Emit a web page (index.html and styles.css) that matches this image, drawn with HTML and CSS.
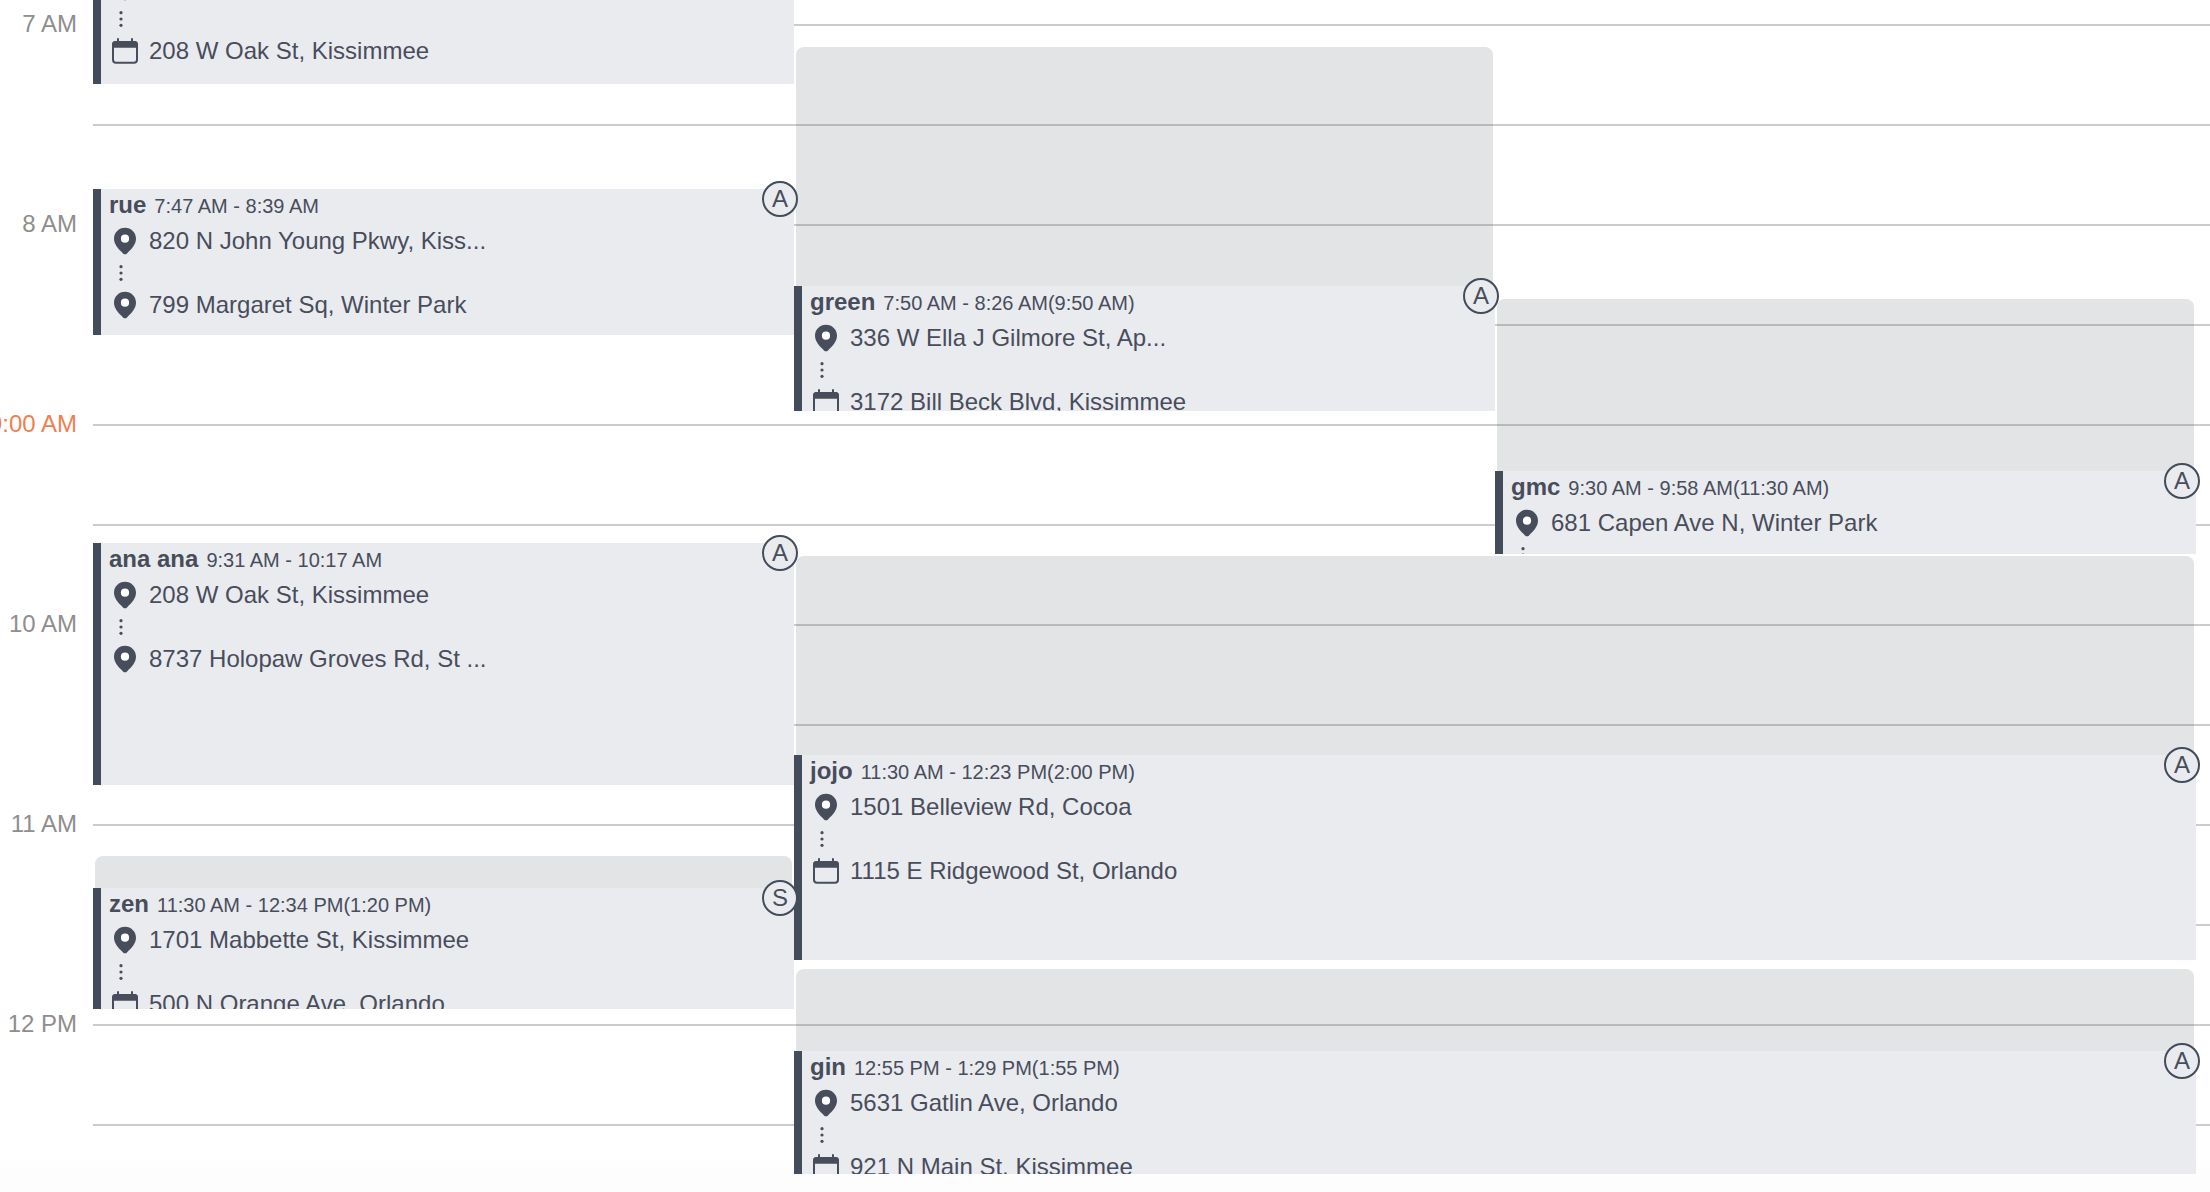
FILE: index.html
```html
<!DOCTYPE html>
<html lang="en">
<head>
    <meta charset="UTF-8">
    <meta name="viewport" content="width=device-width, initial-scale=1.0">
    <title>Day schedule</title>
    <link rel="stylesheet" href="styles.css">
</head>
<body>
    <!-- Shared icons -->
    <svg class="sprite" aria-hidden="true">
        <symbol id="pin" viewBox="0 0 32 32">
            <circle cx="16" cy="13.700" r="5" fill="#fff"/>
            <path fill="currentColor" fill-rule="evenodd" d="M16 2.700C9.900 2.700 5 7.500 5 13.600c0 6 4.200 10.200 9 14.800 1.200 1.200 2.800 1.200 4 0C22.800 23.800 27 19.600 27 13.600 27 7.500 22.100 2.700 16 2.700zM16 9.600a4.100 4.100 0 1 1 0 8.200 4.100 4.100 0 0 1 0-8.200z"/>
        </symbol>
        <symbol id="date" viewBox="0 0 32 32">
            <rect x="4" y="7" width="24" height="20.700" rx="3" fill="none" stroke="currentColor" stroke-width="2"/>
            <path fill="currentColor" d="M3 12.700V9.500A3.500 3.500 0 0 1 6.500 6H8V3.300h2V6h12V3.300h2V6h1.500A3.500 3.500 0 0 1 29 9.500v3.200z"/>
        </symbol>
        <symbol id="dots" viewBox="0 0 32 32">
            <g fill="currentColor">
                <circle cx="12" cy="9.700" r="1.600"/>
                <circle cx="12" cy="16" r="1.600"/>
                <circle cx="12" cy="22.300" r="1.600"/>
            </g>
        </symbol>
    </svg>

    <main class="calendar">
        <!-- Hours -->
        <div class="hours">
            <div class="hour">7 AM</div>
            <div class="hour">8 AM</div>
            <div class="hour current">9:00 AM</div>
            <div class="hour">10 AM</div>
            <div class="hour">11 AM</div>
            <div class="hour">12 PM</div>
        </div>

        <div class="board">
            <!-- First lane -->
            <div class="lane">
                <article class="booking" style="--gap: -65px; --length: 149px">
                    <div class="card">
                        <div class="card-head"></div>
                        <div class="stop"><svg class="icon"><use href="#pin"/></svg></div>
                        <svg class="icon"><use href="#dots"/></svg>
                        <div class="stop"><svg class="icon"><use href="#date"/></svg>208 W Oak St, Kissimmee</div>
                    </div>
                </article>

                <article class="booking" style="--gap: 105px; --length: 146px">
                    <div class="card">
                        <div class="card-head"><strong>rue</strong><span class="time">7:47 AM - 8:39 AM</span></div>
                        <div class="stop"><svg class="icon"><use href="#pin"/></svg>820 N John Young Pkwy, Kiss...</div>
                        <svg class="icon"><use href="#dots"/></svg>
                        <div class="stop"><svg class="icon"><use href="#pin"/></svg>799 Margaret Sq, Winter Park</div>
                        <span class="badge">A</span>
                    </div>
                </article>

                <article class="booking" style="--gap: 208px; --length: 242px">
                    <div class="card">
                        <div class="card-head"><strong>ana ana</strong><span class="time">9:31 AM - 10:17 AM</span></div>
                        <div class="stop"><svg class="icon"><use href="#pin"/></svg>208 W Oak St, Kissimmee</div>
                        <svg class="icon"><use href="#dots"/></svg>
                        <div class="stop"><svg class="icon"><use href="#pin"/></svg>8737 Holopaw Groves Rd, St ...</div>
                        <span class="badge">A</span>
                    </div>
                </article>

                <article class="booking" style="--gap: 71px; --travel: 32px; --length: 121px">
                    <div class="travel"></div>
                    <div class="card">
                        <div class="card-head"><strong>zen</strong><span class="time">11:30 AM - 12:34 PM(1:20 PM)</span></div>
                        <div class="stop"><svg class="icon"><use href="#pin"/></svg>1701 Mabbette St, Kissimmee</div>
                        <svg class="icon"><use href="#dots"/></svg>
                        <div class="stop"><svg class="icon"><use href="#date"/></svg>500 N Orange Ave, Orlando</div>
                        <span class="badge">S</span>
                    </div>
                </article>
            </div>

            <!-- Second and third lanes, joined below -->
            <div class="lane wide">
                <div class="split">
                    <div class="lane">
                        <article class="booking" style="--gap: 47px; --travel: 239px; --length: 125px">
                            <div class="travel"></div>
                            <div class="card">
                                <div class="card-head"><strong>green</strong><span class="time">7:50 AM - 8:26 AM(9:50 AM)</span></div>
                                <div class="stop"><svg class="icon"><use href="#pin"/></svg>336 W Ella J Gilmore St, Ap...</div>
                                <svg class="icon"><use href="#dots"/></svg>
                                <div class="stop"><svg class="icon"><use href="#date"/></svg>3172 Bill Beck Blvd, Kissimmee</div>
                                <span class="badge">A</span>
                            </div>
                        </article>
                    </div>
                    <div class="lane">
                        <article class="booking" style="--gap: 299px; --travel: 172px; --length: 83px">
                            <div class="travel"></div>
                            <div class="card">
                                <div class="card-head"><strong>gmc</strong><span class="time">9:30 AM - 9:58 AM(11:30 AM)</span></div>
                                <div class="stop"><svg class="icon"><use href="#pin"/></svg>681 Capen Ave N, Winter Park</div>
                                <svg class="icon"><use href="#dots"/></svg>
                                <span class="badge">A</span>
                            </div>
                        </article>
                    </div>
                </div>

                <article class="booking" style="--gap: 2px; --travel: 199px; --length: 205px">
                    <div class="travel"></div>
                    <div class="card">
                        <div class="card-head"><strong>jojo</strong><span class="time">11:30 AM - 12:23 PM(2:00 PM)</span></div>
                        <div class="stop"><svg class="icon"><use href="#pin"/></svg>1501 Belleview Rd, Cocoa</div>
                        <svg class="icon"><use href="#dots"/></svg>
                        <div class="stop"><svg class="icon"><use href="#date"/></svg>1115 E Ridgewood St, Orlando</div>
                        <span class="badge">A</span>
                    </div>
                </article>

                <article class="booking" style="--gap: 9px; --travel: 82px; --length: 123px">
                    <div class="travel"></div>
                    <div class="card">
                        <div class="card-head"><strong>gin</strong><span class="time">12:55 PM - 1:29 PM(1:55 PM)</span></div>
                        <div class="stop"><svg class="icon"><use href="#pin"/></svg>5631 Gatlin Ave, Orlando</div>
                        <svg class="icon"><use href="#dots"/></svg>
                        <div class="stop"><svg class="icon"><use href="#date"/></svg>921 N Main St, Kissimmee</div>
                        <span class="badge">A</span>
                    </div>
                </article>
            </div>
        </div>
    </main>
</body>
</html>
```

FILE: styles.css
```css
* {
    box-sizing: border-box;
}

body {
    margin: 0;
    background: #fff;
    color: #484d5c;
    font-family: "Liberation Sans", Arial, sans-serif;
    font-size: 24px;
}

.sprite {
    display: none;
}

.calendar {
    display: grid;
    grid-template-columns: 93px 1fr;
    height: 100vh;
    overflow: hidden;
    background: linear-gradient(to top, #fcfcfc, #fff 40px);
}

/* Hours */
.hour {
    display: flex;
    justify-content: flex-end;
    height: 200px;
    padding-right: 16px;
    color: #8e8e8e;
    line-height: 48px;
    white-space: nowrap;
}

.hour.current {
    color: #f07f50;
}

/* Board with a line every half hour */
.board {
    display: grid;
    grid-template-columns: repeat(3, 1fr);
    padding-right: 14px;
    background: linear-gradient(#ccc 2px, transparent 2px) 0 24px / 100% 100px;
}

.lane {
    display: flex;
    flex-direction: column;
    min-width: 0;
}

/* badges of the first lane lie over the next one */
.board > .lane:first-child {
    z-index: 1;
}

.wide {
    grid-column: span 2;
}

.split {
    display: grid;
    grid-template-columns: 1fr 1fr;
}

/* Bookings */
.booking {
    margin-top: var(--gap);
}

.travel {
    height: var(--travel);
    margin: 0 2px;
    border-radius: 8px 8px 0 0;
    background: rgba(72, 85, 92, 0.157);
}

.card {
    position: relative;
    height: var(--length);
    padding-left: 8px;
    border-left: 8px solid #424c5b;
    background: #eaebef;
    /* cuts the rows at the bottom edge, the badge may stick out above and right */
    clip-path: inset(-8px -4px 0 0);
}

.card-head {
    display: flex;
    align-items: baseline;
    gap: 8px;
    height: 36px;
    line-height: 32px;
    white-space: nowrap;
}

.time {
    font-size: 20px;
}

.stop {
    display: flex;
    align-items: center;
    gap: 8px;
    height: 32px;
    line-height: 32px;
    white-space: nowrap;
}

.icon {
    display: block;
    flex: none;
    width: 32px;
    height: 32px;
}

.badge {
    position: absolute;
    top: -8px;
    right: -4px;
    width: 36px;
    height: 36px;
    border: 2px solid #424c5b;
    border-radius: 50%;
    background: #eaebef;
    line-height: 32px;
    text-align: center;
}
```
